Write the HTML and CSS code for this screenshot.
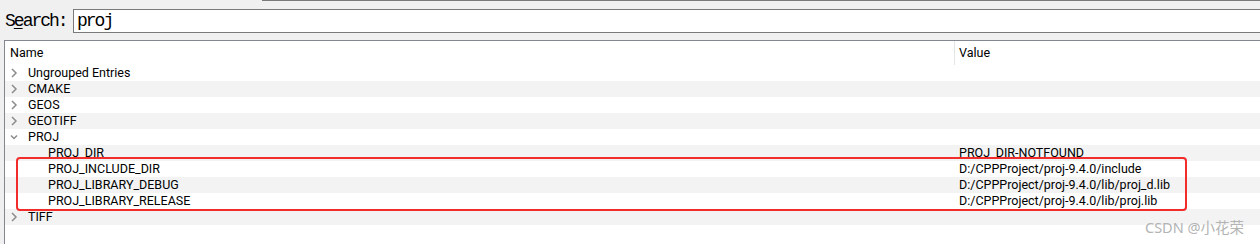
FILE: index.html
```html
<!DOCTYPE html>
<html lang="en">
<head>
    <meta charset="UTF-8">
    <title>CMake Cache</title>
    <link rel="stylesheet" href="styles.css">
</head>
<body>

    <div class="top-edge"></div>

    <div class="search-row">
        <label class="search-label" for="search">S<u>e</u>arch:</label>
        <div class="search-box" id="search">proj</div>
    </div>

    <div class="tree">
        <div class="tree-head">
            <div class="col-name">Name</div>
            <div class="col-value">Value</div>
        </div>

        <div class="row">
            <div class="col-name"><svg class="arrow" viewBox="0 0 18 16"><path d="M2 4 L6 8 L2 12"/></svg>Ungrouped Entries</div>
            <div class="col-value"></div>
        </div>
        <div class="row">
            <div class="col-name"><svg class="arrow" viewBox="0 0 18 16"><path d="M2 4 L6 8 L2 12"/></svg>CMAKE</div>
            <div class="col-value"></div>
        </div>
        <div class="row">
            <div class="col-name"><svg class="arrow" viewBox="0 0 18 16"><path d="M2 4 L6 8 L2 12"/></svg>GEOS</div>
            <div class="col-value"></div>
        </div>
        <div class="row">
            <div class="col-name"><svg class="arrow" viewBox="0 0 18 16"><path d="M2 4 L6 8 L2 12"/></svg>GEOTIFF</div>
            <div class="col-value"></div>
        </div>
        <div class="row">
            <div class="col-name"><svg class="arrow" viewBox="0 0 18 16"><path d="M1 6.5 L4 9.5 L7 6.5"/></svg>PROJ</div>
            <div class="col-value"></div>
        </div>
        <div class="row child">
            <div class="col-name">PROJ_DIR</div>
            <div class="col-value">PROJ_DIR-NOTFOUND</div>
        </div>
        <div class="row child">
            <div class="col-name">PROJ_INCLUDE_DIR</div>
            <div class="col-value">D:/CPPProject/proj-9.4.0/include</div>
        </div>
        <div class="row child">
            <div class="col-name">PROJ_LIBRARY_DEBUG</div>
            <div class="col-value">D:/CPPProject/proj-9.4.0/lib/proj_d.lib</div>
        </div>
        <div class="row child">
            <div class="col-name">PROJ_LIBRARY_RELEASE</div>
            <div class="col-value">D:/CPPProject/proj-9.4.0/lib/proj.lib</div>
        </div>
        <div class="row">
            <div class="col-name"><svg class="arrow" viewBox="0 0 18 16"><path d="M2 4 L6 8 L2 12"/></svg>TIFF</div>
            <div class="col-value"></div>
        </div>

        <div class="highlight"></div>
        <div class="watermark">CSDN @小花荣</div>
    </div>

</body>
</html>
```

FILE: styles.css
```css
body {
    margin: 0;
    background-color: #f0f0f0;
    font-family: Roboto, "Liberation Sans", Arial, sans-serif;
    color: #000;
    overflow: hidden;
    height: 244px;
}
.top-edge {
    margin-left: 262px;
    height: 1px;
    background-color: #7a7a7a;
}
.search-row {
    display: flex;
    align-items: center;
    margin-top: 8px;
    height: 24px;
}
.search-label,
.search-box {
    font-family: "Liberation Mono", "Courier New", monospace;
    font-size: 18px;
    letter-spacing: -2px;
}
.search-label {
    width: 68px;
    padding-left: 5px;
}
.search-label u {
    text-underline-offset: 2px;
}
.search-box {
    flex: 1;
    height: 22px;
    line-height: 22px;
    padding-left: 3px;
    background-color: #fff;
    border: 1px solid #7a7a7a;
    border-right: none;
}
.tree {
    position: relative;
    margin-top: 7px;
    margin-left: 4px;
    height: 203px;
    background-color: #fff;
    border-top: 1px solid #828790;
    border-left: 1px solid #828790;
    font-size: 12.5px;
}
.tree-head,
.row {
    display: grid;
    grid-template-columns: 949px 1fr;
}
.tree-head {
    height: 24px;
    line-height: 24px;
}
.tree-head .col-name {
    padding-left: 5px;
}
.tree-head .col-value {
    border-left: 1px solid #e5e5e5;
    padding-left: 4px;
}
.row {
    height: 16px;
    line-height: 16px;
}
.row:nth-of-type(odd) {
    background-color: #f3f3f3;
}
.row .col-name {
    display: flex;
    align-items: center;
    padding-left: 5px;
}
.row.child .col-name {
    padding-left: 43px;
}
.row .col-value {
    padding-left: 5px;
}
.arrow {
    width: 18px;
    height: 16px;
    flex: none;
}
.arrow path {
    fill: none;
    stroke: #8c8c8c;
    stroke-width: 1.5;
}
.highlight {
    position: absolute;
    left: 11px;
    top: 116px;
    width: 1167px;
    height: 50px;
    border: 2px solid #f22b2b;
    border-radius: 4px;
}
.watermark {
    position: absolute;
    left: 1140px;
    top: 175px;
    font-family: "Noto Sans", "Noto Sans CJK SC", sans-serif;
    font-size: 14.5px;
    color: #b4b4b4;
}
```
